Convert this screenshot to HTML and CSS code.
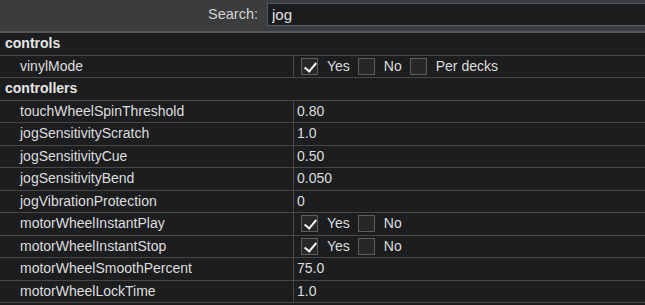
FILE: index.html
```html
<!DOCTYPE html>
<html lang="en">
<head>
<meta charset="UTF-8">
<title>Settings</title>
<link rel="stylesheet" href="styles.css">
</head>
<body>

<!-- search bar -->
<div class="searchbar">
  <label for="search">Search:</label>
  <input id="search" type="text" value="jog">
</div>

<!-- settings table -->
<div class="table">
  <div class="group">controls</div>
  <div class="row">
    <div class="key">vinylMode</div>
    <div class="val">
      <span class="cb on"></span><span class="opt">Yes</span>
      <span class="cb"></span><span class="opt">No</span>
      <span class="cb"></span><span class="opt">Per decks</span>
    </div>
  </div>

  <div class="group">controllers</div>
  <div class="row"><div class="key">touchWheelSpinThreshold</div><div class="val">0.80</div></div>
  <div class="row"><div class="key">jogSensitivityScratch</div><div class="val">1.0</div></div>
  <div class="row"><div class="key">jogSensitivityCue</div><div class="val">0.50</div></div>
  <div class="row"><div class="key">jogSensitivityBend</div><div class="val">0.050</div></div>
  <div class="row"><div class="key">jogVibrationProtection</div><div class="val">0</div></div>
  <div class="row">
    <div class="key">motorWheelInstantPlay</div>
    <div class="val"><span class="cb on"></span><span class="opt">Yes</span><span class="cb"></span><span class="opt">No</span></div>
  </div>
  <div class="row">
    <div class="key">motorWheelInstantStop</div>
    <div class="val"><span class="cb on"></span><span class="opt">Yes</span><span class="cb"></span><span class="opt">No</span></div>
  </div>
  <div class="row"><div class="key">motorWheelSmoothPercent</div><div class="val">75.0</div></div>
  <div class="row"><div class="key">motorWheelLockTime</div><div class="val">1.0</div></div>
</div>

</body>
</html>
```

FILE: styles.css
```css
/* ===== global ===== */
html,body{margin:0;height:100%}
body{background:#1c1d1f;color:#dedede;font-family:"Liberation Sans",Arial,sans-serif;font-size:14px;overflow:hidden}

/* ---------- search bar ---------- */
.searchbar{
  height:33px;box-sizing:border-box;padding:3px 0 0 0;
  background:#3b3c3e;border-bottom:2px solid #55575a;
  display:flex;align-items:flex-start;justify-content:flex-end
}
.searchbar label{color:#d2d2d2;font-size:14.5px;line-height:23px;margin-right:9px}
.searchbar input{
  width:378px;height:23px;box-sizing:border-box;margin:0;
  background:#1b1c1e;color:#e2e2e2;border:1px solid #4e5a6a;border-right:none;
  font:15px "Liberation Sans",Arial,sans-serif;padding:0 4px;outline:none
}

/* ---------- table ---------- */
.table{display:flex;flex-direction:column}
.group,.row{height:22.5px;box-sizing:border-box;border-bottom:1px solid #47484a}
.group{padding-left:5px;font-weight:bold;line-height:21px;font-size:14px;color:#e6e6e6}
.row{display:grid;grid-template-columns:294px 1fr}
.key{padding-left:20px;line-height:21px;border-right:1px solid #47484a}
.val{padding-left:3px;line-height:21px;display:flex;align-items:center}

/* checkboxes */
.cb{
  width:17px;height:17px;box-sizing:border-box;margin:0 9px 0 4px;
  border:1px solid #5c5d5f;background:#262729;position:relative
}
.cb.on::after{
  content:"";position:absolute;left:5px;top:1px;width:5px;height:10px;
  border:solid #f2f2f2;border-width:0 2.5px 2.5px 0;transform:rotate(40deg)
}
.opt{margin-right:4px}
```
